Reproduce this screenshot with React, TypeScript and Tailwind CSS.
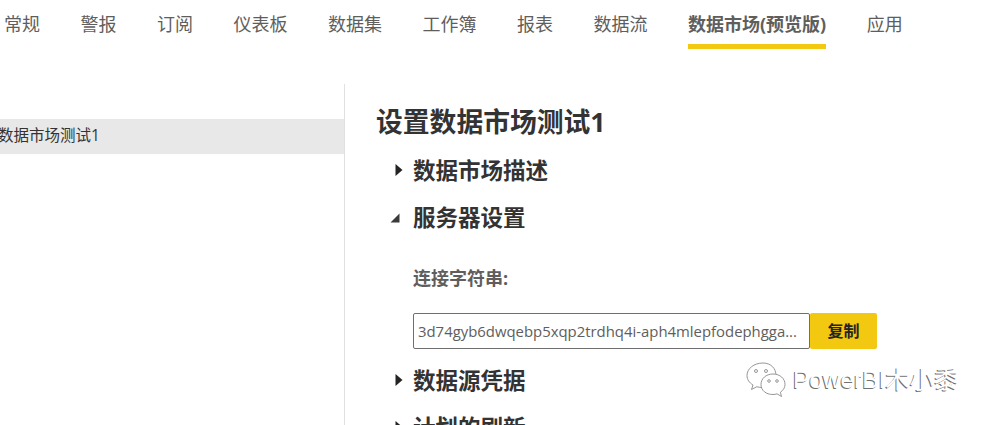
const tabs = ["常规", "警报", "订阅", "仪表板", "数据集", "工作簿", "报表", "数据流", "数据市场(预览版)", "应用"];
const font = "font-['Open_Sans','Noto_Sans_CJK_SC',sans-serif]";

function Caret({ open }: { open?: boolean }) {
  if (open) {
    return (
      <svg width="10" height="10" viewBox="0 0 10 10" className="absolute left-[-23px] top-[10px]">
        <path d="M0.5 9.5H9.5V0.5Z" fill="#3a3a3a" />
      </svg>
    );
  }
  return (
    <svg width="8" height="14" viewBox="0 0 8 14" className="absolute left-[-18px] top-[7px]">
      <path d="M0.5 1L7.5 7L0.5 13Z" fill="#252423" />
    </svg>
  );
}

function Section({ title, open }: { title: string; open?: boolean }) {
  return (
    <div className="relative h-[47px] text-[22.5px] leading-[30px] font-bold text-[#333333]">
      <Caret open={open} />
      {title}
    </div>
  );
}

function Watermark() {
  return (
    <div className="absolute left-[746px] top-[362px] flex items-center gap-[7px]">
      <svg width="40" height="36" viewBox="0 0 40 36" fill="white" stroke="#8a8a8a" strokeWidth="0.9">
        <path d="M17 1C8 1 1 6.500 1 13.500C1 17.500 3.300 20.800 7 23L5.500 27.500L10.800 24.700C12.500 25.200 14 25.500 16 25.500C24 25.500 30 20 30 13.500C30 6.500 25 1 17 1Z" />
        <circle cx="10" cy="9" r="1.500" />
        <circle cx="20" cy="9" r="1.500" />
        <path d="M27 12C20 12 15 16.500 15 22.500C15 28.500 20 32.500 27 32.500C28.500 32.500 29.700 32.300 31 31.800L35.500 34.500L34.400 30.300C37.300 28.200 39 25.500 39 22.500C39 16.500 34 12 27 12Z" />
        <circle cx="23" cy="19" r="1.300" />
        <circle cx="31" cy="19" r="1.300" />
      </svg>
      <span className="text-[24.4px] leading-[30px] text-white [text-shadow:-1px_1px_0_#6f6f6f] font-['Liberation_Sans','Noto_Sans_CJK_SC',sans-serif]">
        PowerBI木小黍
      </span>
    </div>
  );
}

export default function App() {
  return (
    <div className={`relative h-[425px] w-[990px] overflow-hidden bg-white ${font}`}>
      <nav className="ml-[4px] flex h-[49px] gap-[40.5px] text-[18px] text-[#605e5c]">
        {tabs.map((t) =>
          t.startsWith("数据市场") ? (
            <div key={t} className="h-full border-b-[5px] border-[#f2c811] pt-[11px] leading-[27px] font-bold">
              {t}
            </div>
          ) : (
            <div key={t} className="h-full pt-[11px] leading-[27px]">
              {t}
            </div>
          ),
        )}
      </nav>

      <div className="mt-[35px] flex">
        <aside className="h-[400px] w-[345px] shrink-0 border-r border-[#e1e1e1] pt-[35px]">
          <div className="h-[35px] bg-[#e8e8e8] text-[15.5px] leading-[33px] text-[#333333]">
            <span className="ml-[-2px] block">数据市场测试1</span>
          </div>
        </aside>

        <main className="pl-[31px] pt-[20px]">
          <h1 className="mb-[16px] text-[26.8px] leading-[36px] font-bold text-[#333333]">设置数据市场测试1</h1>
          <div className="pl-[37px]">
            <Section title="数据市场描述" />
            <Section title="服务器设置" open />
            <div className="mt-[16px] text-[18px] leading-[24px] font-bold text-[#605e5c]">连接字符串:</div>
            <div className="mt-[23px] mb-[17px] flex h-[36px]">
              <div className="w-[397px] truncate rounded-[2px] border border-[#6f6f6f] px-[4px] text-[14.9px] leading-[34px] text-[#605e5c]">
                3d74gyb6dwqebp5xqp2trdhq4i-aph4mlepfodephgga...
              </div>
              <button className="w-[67px] rounded-[2px] bg-[#f2c811] text-[16px] font-semibold text-[#252423]">复制</button>
            </div>
            <Section title="数据源凭据" />
            <Section title="计划的刷新" />
          </div>
        </main>
      </div>

      <Watermark />
    </div>
  );
}
